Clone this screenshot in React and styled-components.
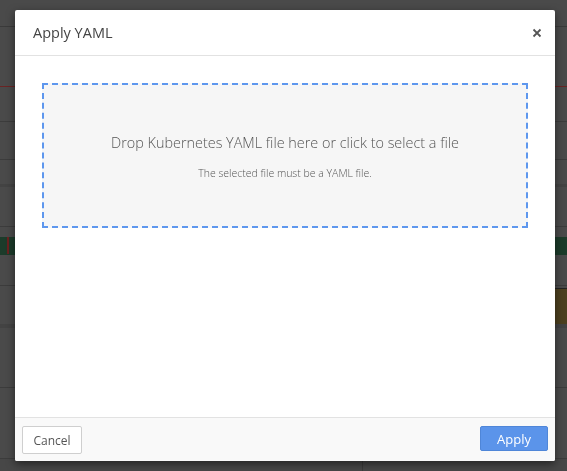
import React from "react";
import styled, { createGlobalStyle } from "styled-components";

const GlobalStyle = createGlobalStyle`
  html, body {
    margin: 0;
    padding: 0;
    height: 100%;
    overflow: hidden;
    background: #4a4a4a;
    font-family: "Open Sans", "Liberation Sans", sans-serif;
  }
  #root {
    height: 100%;
  }
`;

// dimmed page underneath the dialog
const Page = styled.div`
  display: flex;
  flex-direction: column;
  height: 100%;
  background: #4a4a4a;
`;

const Row = styled.div`
  display: flex;
  justify-content: space-between;
  align-items: flex-start;
  height: ${(p) => p.h}px;
  flex: none;
  background: ${(p) => p.bg || "#4a4a4a"};
  border-bottom: 1px solid ${(p) => p.line || "#3c3c3c"};
`;

const Marker = styled.div`
  width: 2px;
  height: 100%;
  margin-left: 7px;
  background: #6b1f1f;
`;

const Swatch = styled.div`
  width: 12px;
  height: 64px;
  margin-top: 2px;
  margin-left: auto;
  background: #4d4020;
  border-top: 1px solid #222;
  border-bottom: 1px solid #222;
`;

const BottomRow = styled.div`
  display: flex;
  flex: 1;
  background: #474747;
`;

const Half = styled.div`
  width: 362px;
  border-right: 1px solid #3a3a3a;
`;

const Overlay = styled.div`
  position: fixed;
  inset: 0;
  display: flex;
  justify-content: flex-start;
  align-items: flex-start;
  padding: 10px 0 0 15px;
`;

const Dialog = styled.div`
  width: 540px;
  height: 451px;
  display: flex;
  flex-direction: column;
  background: #fff;
  border-radius: 2px;
  box-shadow: 0 3px 9px rgba(0, 0, 0, 0.5);
  overflow: hidden;
`;

const Header = styled.div`
  display: flex;
  align-items: center;
  justify-content: space-between;
  height: 45px;
  padding: 0 13px 0 18px;
  border-bottom: 1px solid #e2e2e2;
`;

const Title = styled.h4`
  margin: 0;
  font-size: 14.5px;
  font-weight: 400;
  color: #444;
`;

const Close = styled.button`
  border: 0;
  background: none;
  padding: 0;
  display: flex;
  color: #555;
  cursor: pointer;
`;

const Body = styled.div`
  flex: 1;
  padding: 27px 27px 0;
`;

const DropZone = styled.div`
  height: 141px;
  box-sizing: content-box;
  border: 2px dashed #5e97ee;
  background: #f6f6f6;
  display: flex;
  flex-direction: column;
  align-items: center;
  cursor: pointer;
`;

const DropText = styled.div`
  margin-top: 48px;
  font-size: 14.4px;
  font-weight: 300;
  color: #555;
`;

const Hint = styled.div`
  margin-top: 14px;
  font-size: 10.5px;
  font-weight: 300;
  color: #555;
`;

const Footer = styled.div`
  display: flex;
  justify-content: space-between;
  align-items: flex-start;
  height: 35px;
  padding: 8px 7px 0 7px;
  background: #f9f9f9;
  border-top: 1px solid #e2e2e2;
`;

const Button = styled.button`
  font-family: inherit;
  border-radius: 2px;
  cursor: pointer;
  padding: 0;
  width: ${(p) => p.w}px;
  height: ${(p) => p.h}px;
  color: ${(p) => (p.primary ? "#fff" : "#555")};
  background: ${(p) => (p.primary ? "#5b94ea" : "#fff")};
  border: 1px solid ${(p) => (p.primary ? "#4f86d8" : "#cfcfcf")};
  font-size: ${(p) => (p.primary ? 13 : 12)}px;
`;

export default function App() {
  return (
    <>
      <GlobalStyle />
      <Page>
        <Row h={26} line="#3a3a3a" />
        <Row h={59} line="#6a2424" />
        <Row h={34} />
        <Row h={37} />
        <Row h={23} line="#4a4a4a" />
        <Row h={3} bg="#434343" line="#4a4a4a" />
        <Row h={38} />
        <Row h={9} line="#4a4a4a" />
        <Row h={17} bg="#1c3b2a" line="#1c3b2a">
          <Marker />
        </Row>
        <Row h={30} />
        <Row h={37} line="#4a4a4a">
          <Swatch />
        </Row>
        <Row h={4} bg="#434343" line="#4a4a4a" />
        <Row h={58} />
        <Row h={70} />
        <BottomRow>
          <Half />
        </BottomRow>
      </Page>
      <Overlay>
        <Dialog>
          <Header>
            <Title>Apply YAML</Title>
            <Close aria-label="Close">
              <svg width="10" height="10" viewBox="0 0 10 10">
                <path d="M1.5 1.5l7 7M8.5 1.5l-7 7" stroke="currentColor" strokeWidth="1.8" />
              </svg>
            </Close>
          </Header>
          <Body>
            <DropZone>
              <DropText>Drop Kubernetes YAML file here or click to select a file</DropText>
              <Hint>The selected file must be a YAML file.</Hint>
            </DropZone>
          </Body>
          <Footer>
            <Button w={60} h={28}>Cancel</Button>
            <Button primary w={68} h={25}>Apply</Button>
          </Footer>
        </Dialog>
      </Overlay>
    </>
  );
}
